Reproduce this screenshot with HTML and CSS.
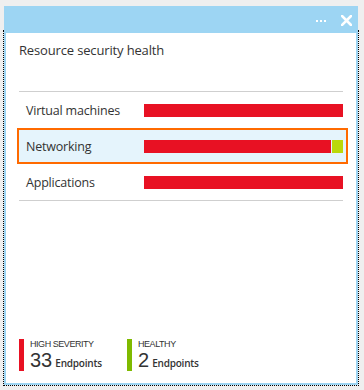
FILE: index.html
```html
<!DOCTYPE html>
<html lang="en">
<head>
    <meta charset="UTF-8">
    <meta name="viewport" content="width=device-width, initial-scale=1.0">
    <title>Resource security health</title>
    <link rel="stylesheet" href="styles.css">
</head>
<body>
    <div class="blade">
        <div class="blade-header">
            <span class="dots"><i></i><i></i><i></i></span>
            <svg class="close" width="11" height="11" viewBox="0 0 11 11">
                <path d="M1 1 L10 10 M10 1 L1 10" stroke="#fff" stroke-width="2.6" stroke-linecap="square"/>
            </svg>
        </div>
        <div class="blade-body">
            <h1 class="title">Resource security health</h1>

            <div class="health-list">
                <div class="health-row">
                    <span class="row-label">Virtual machines</span>
                    <div class="bar">
                        <div class="bar-bad" style="width: 100%"></div>
                    </div>
                </div>
                <div class="health-row selected">
                    <span class="row-label">Networking</span>
                    <div class="bar">
                        <div class="bar-bad" style="width: 94.5%"></div>
                        <div class="bar-good" style="width: 5.5%"></div>
                    </div>
                </div>
                <div class="health-row">
                    <span class="row-label">Applications</span>
                    <div class="bar">
                        <div class="bar-bad" style="width: 100%"></div>
                    </div>
                </div>
            </div>

            <div class="legend">
                <div class="legend-item high">
                    <div class="legend-label">HIGH SEVERITY</div>
                    <div class="legend-value"><span class="count">33</span><span class="unit">Endpoints</span></div>
                </div>
                <div class="legend-item healthy">
                    <div class="legend-label">HEALTHY</div>
                    <div class="legend-value"><span class="count">2</span><span class="unit">Endpoints</span></div>
                </div>
            </div>
        </div>
    </div>
</body>
</html>
```

FILE: styles.css
```css
html, body {
    margin: 0;
    padding: 0;
}

body {
    background-color: #efefef;
    font-family: 'Open Sans', 'Noto Sans', sans-serif;
    color: #333333;
    padding: 6px 0 0 4px;
    height: 390px;
    box-sizing: border-box;
}

.blade {
    width: 354px;
    height: 379px;
    display: flex;
    flex-direction: column;
}

.blade-header {
    height: 27px;
    background-color: #9dd5f3;
    display: flex;
    align-items: center;
    justify-content: flex-end;
    padding-right: 6px;
    gap: 15px;
    flex-shrink: 0;
}

.dots {
    display: flex;
    gap: 2px;
    margin-top: 3px;
}

.dots i {
    width: 2px;
    height: 2px;
    background-color: #ffffff;
}

.close {
    display: block;
    margin-top: 1px;
}

.blade-body {
    flex: 1;
    position: relative;
    background-color: #ffffff;
    border: 2px solid #9dd5f3;
    border-top: none;
    padding: 0 13px 12px 13px;
    display: flex;
    flex-direction: column;
}

/* focus ring of the blade */
.blade-body::after {
    content: '';
    position: absolute;
    top: -3px;
    left: -3px;
    right: -3px;
    bottom: -3px;
    border: 1px dotted #000000;
    border-top: none;
    pointer-events: none;
}

.title {
    font-size: 13px;
    font-weight: normal;
    margin: 7px 0 0 0;
    line-height: 20px;
    letter-spacing: -0.15px;
}

.health-list {
    margin-top: 31px;
    border-top: 1px solid #cfcfcf;
    border-bottom: 1px solid #cfcfcf;
}

.health-row {
    height: 36px;
    display: flex;
    align-items: center;
    box-sizing: border-box;
}

.health-row.selected {
    border: 2px solid #ff6a00;
    background-color: #e5f4fc;
    margin: 0 -5px 0 -2px;
    padding-right: 3px;
}

.row-label {
    width: 118px;
    padding-left: 7px;
    font-size: 12.5px;
    letter-spacing: -0.2px;
}

.bar {
    flex: 1;
    height: 13px;
    display: flex;
    gap: 1px;
}

.bar-bad {
    background-color: #e81123;
}

.bar-good {
    background-color: #bad80a;
}

.legend {
    margin-top: auto;
    display: flex;
}

.legend-item {
    width: 108px;
    border-left: 5px solid #e81123;
    padding-left: 6px;
    height: 32px;
    box-sizing: border-box;
}

.legend-item.healthy {
    border-left-color: #7fba00;
}

.legend-label {
    font-family: 'Liberation Sans', Arial, sans-serif;
    font-size: 9px;
    line-height: 10px;
    letter-spacing: -0.45px;
}

.legend-value {
    display: flex;
    align-items: baseline;
    gap: 3px;
    height: 22px;
}

.count {
    font-family: 'Liberation Sans', Arial, sans-serif;
    font-size: 20px;
    line-height: 22px;
}

.unit {
    font-size: 10px;
    font-weight: 600;
    line-height: 12px;
    letter-spacing: -0.2px;
}
```
